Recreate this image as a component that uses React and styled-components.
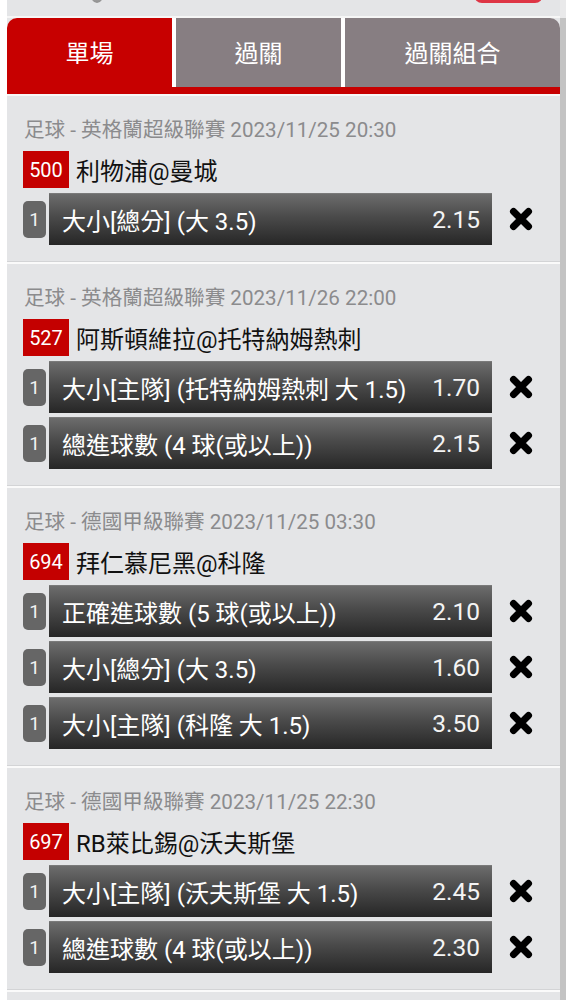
import React from "react";
import styled, { createGlobalStyle } from "styled-components";

const Global = createGlobalStyle`
  html, body { margin: 0; padding: 0; background: #ffffff; }
  body { font-family: Roboto, "Noto Sans CJK TC", "Noto Sans", sans-serif; }
  * { box-sizing: border-box; }
`;

const Page = styled.div`
  display: flex;
  min-height: 1000px;
  padding-left: 7px;
  background: #ffffff;
`;

const Main = styled.div`
  width: 553px;
  display: flex;
  flex-direction: column;
  background: #e4e5e7;
`;

const Rail = styled.div`
  width: 6px;
  display: flex;
  flex-direction: column;
`;

const RailTop = styled.div`
  height: 18px;
  background: #e9e9ea;
`;

const RailBar = styled.div`
  flex: 1;
  background: #c3c3c3;
`;

const Header = styled.div`
  height: 18px;
  display: flex;
  align-items: flex-start;
  overflow: hidden;
  border-bottom: 2px solid #f6f6f6;
  padding-left: 83px;
`;

const Knob = styled.div`
  width: 14px;
  height: 20px;
  margin-top: -17px;
  border-radius: 50%;
  background: radial-gradient(circle at 50% 40%, #b9b9b9, #8a8a8a);
`;

const RedPill = styled.div`
  width: 69px;
  height: 30px;
  margin-top: -27px;
  margin-left: 370px;
  border-radius: 8px;
  background: #de3545;
`;

const Tabs = styled.div`
  display: flex;
  gap: 4px;
  border-radius: 10px 10px 0 0;
  overflow: hidden;
  background: #ffffff;
  border-bottom: 7px solid #c70000;
`;

const Tab = styled.div`
  height: 69px;
  width: ${(p) => p.$w || "auto"};
  flex: ${(p) => (p.$w ? "none" : "1")};
  display: flex;
  align-items: center;
  justify-content: center;
  padding-bottom: 3px;
  background: ${(p) => (p.$active ? "#c70000" : "#877e82")};
  color: #ffffff;
  font-size: 24px;
`;

const TabGap = styled.div`
  height: 2px;
  background: #f7f7f7;
`;

const Card = styled.div`
  padding: 19px 10px 16px 16px;
  border-bottom: 1px solid #d3d4d6;
  box-shadow: 0 2px 0 #fafafa;
  margin-bottom: 2px;
  display: flex;
  flex-direction: column;
`;

const League = styled.div`
  height: 30px;
  line-height: 30px;
  font-size: 20.6px;
  color: #8b8b8d;
  padding-left: 1px;
  white-space: nowrap;
`;

const MatchRow = styled.div`
  display: flex;
  align-items: center;
  gap: 7px;
  margin-top: 6px;
  height: 37px;
`;

const MatchNo = styled.div`
  width: 46px;
  height: 37px;
  display: flex;
  align-items: center;
  justify-content: center;
  background: #c40000;
  color: #ffffff;
  font-size: 20px;
`;

const MatchName = styled.div`
  font-size: 24px;
  color: #111111;
  white-space: nowrap;
`;

const Bets = styled.div`
  display: flex;
  flex-direction: column;
  gap: 4px;
  margin-top: 5px;
`;

const BetRow = styled.div`
  display: flex;
  align-items: center;
  height: 52px;
`;

const Leg = styled.div`
  width: 23px;
  height: 37px;
  border-radius: 5px;
  background: #666666;
  color: #f2f2f2;
  font-size: 19px;
  display: flex;
  align-items: center;
  justify-content: center;
  margin-right: 3px;
`;

const BetBar = styled.div`
  width: 443px;
  height: 52px;
  display: flex;
  align-items: center;
  justify-content: space-between;
  padding: 0 12px 0 13px;
  background: linear-gradient(to bottom, #6c6c6c 0%, #4a4a4a 45%, #262626 100%);
  border-top: 1px solid #7a7a7a;
  color: #ffffff;
  font-size: 24px;
  white-space: nowrap;
`;

const Odds = styled.span`
  color: #f4f4f4;
  font-size: 24.5px;
`;

const Remove = styled.div`
  width: 58px;
  display: flex;
  justify-content: center;
  align-items: center;
`;

const CloseIcon = () => (
  <svg width="24" height="24" viewBox="0 0 24 24">
    <path
      d="M4.5 4.5 L19.5 19.5 M19.5 4.5 L4.5 19.5"
      stroke="#000"
      strokeWidth="7"
      strokeLinecap="round"
      fill="none"
    />
  </svg>
);

const cards = [
  {
    league: "足球 - 英格蘭超級聯賽 2023/11/25 20:30",
    no: "500",
    match: "利物浦@曼城",
    bets: [["大小[總分] (大 3.5)", "2.15"]],
  },
  {
    league: "足球 - 英格蘭超級聯賽 2023/11/26 22:00",
    no: "527",
    match: "阿斯頓維拉@托特納姆熱刺",
    bets: [
      ["大小[主隊] (托特納姆熱刺 大 1.5)", "1.70"],
      ["總進球數 (4 球(或以上))", "2.15"],
    ],
  },
  {
    league: "足球 - 德國甲級聯賽 2023/11/25 03:30",
    no: "694",
    match: "拜仁慕尼黑@科隆",
    bets: [
      ["正確進球數 (5 球(或以上))", "2.10"],
      ["大小[總分] (大 3.5)", "1.60"],
      ["大小[主隊] (科隆 大 1.5)", "3.50"],
    ],
  },
  {
    league: "足球 - 德國甲級聯賽 2023/11/25 22:30",
    no: "697",
    match: "RB萊比錫@沃夫斯堡",
    bets: [
      ["大小[主隊] (沃夫斯堡 大 1.5)", "2.45"],
      ["總進球數 (4 球(或以上))", "2.30"],
    ],
  },
];

export default function App() {
  return (
    <>
      <Global />
      <Page>
        <Main>
          <Header>
            <Knob />
            <RedPill />
          </Header>
          <Tabs>
            <Tab $active $w="165px">單場</Tab>
            <Tab $w="165px">過關</Tab>
            <Tab>過關組合</Tab>
          </Tabs>
          <TabGap />
          {cards.map((c) => (
            <Card key={c.no}>
              <League>{c.league}</League>
              <MatchRow>
                <MatchNo>{c.no}</MatchNo>
                <MatchName>{c.match}</MatchName>
              </MatchRow>
              <Bets>
                {c.bets.map(([label, odds], i) => (
                  <BetRow key={i}>
                    <Leg>1</Leg>
                    <BetBar>
                      <span>{label}</span>
                      <Odds>{odds}</Odds>
                    </BetBar>
                    <Remove>
                      <CloseIcon />
                    </Remove>
                  </BetRow>
                ))}
              </Bets>
            </Card>
          ))}
        </Main>
        <Rail>
          <RailTop />
          <RailBar />
        </Rail>
      </Page>
    </>
  );
}
